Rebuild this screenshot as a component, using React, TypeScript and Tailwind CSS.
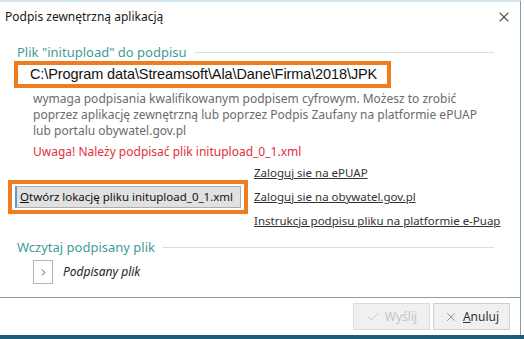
import { X, Check, ChevronRight } from "lucide-react";

const ui = { fontFamily: '"Noto Sans", "Open Sans", sans-serif' };

const GroupTitle = ({ text }: { text: string }) => (
  <div className="flex items-center gap-2 pl-[17px] pr-[26px]">
    <span className="text-[13px] text-[#3f9a96] leading-[16px] whitespace-nowrap">{text}</span>
    <div className="flex-1 h-px bg-[#dcdcdc]" />
  </div>
);

export default function App() {
  return (
    <div className="w-[524px] h-[339px] bg-white flex flex-col overflow-hidden" style={ui}>
      <div className="flex flex-1 min-h-0">
        <div className="w-[521px] flex flex-col border-t-2 border-t-[#d6e6f0] border-r border-r-[#7d9db5]">
          {/* title bar */}
          <div className="h-[30px] flex items-center justify-between pl-[5px] pr-[8px]">
            <span className="text-[12px] text-[#1a1a1a]">Podpis zewnętrzną aplikacją</span>
            <X size={16} strokeWidth={1.6} className="text-[#555]" />
          </div>

          {/* content */}
          <div className="flex flex-col pt-[12px]">
            <GroupTitle text={'Plik "initupload" do podpisu'} />
            <div className="ml-[14px] mt-[1px] w-[377px] h-[27px] border-4 border-[#f07c20] flex items-center pl-[12px] whitespace-nowrap overflow-hidden">
              <span className="text-[14.5px] leading-none text-[#111] tracking-[-0.1px]" style={{ fontFamily: '"Liberation Sans", Arial, sans-serif' }}>
                C:\Program data\Streamsoft\Ala\Dane\Firma\2018\JPK
              </span>
            </div>
            <div className="pl-[33px] pt-[3px] text-[12px] leading-[16px] text-[#6b6b6b] whitespace-nowrap">
              <div>wymaga podpisania kwalifikowanym podpisem cyfrowym. Możesz to zrobić</div>
              <div>poprzez aplikację zewnętrzną lub poprzez Podpis Zaufany na platformie ePUAP</div>
              <div>lub portalu obywatel.gov.pl</div>
            </div>
            <div className="pl-[33px] pt-[5px] text-[12px] leading-[16px] text-[#e2303c] whitespace-nowrap">
              Uwaga! Należy podpisać plik initupload_0_1.xml
            </div>

            <div className="flex items-center pl-[8px] mt-[1px]">
              <div className="w-[240px] h-[34px] shrink-0 border-4 border-[#f07c20] flex items-center justify-center">
                <div className="w-[226px] h-[22px] bg-[#e1e1e1] border border-[#adadad] border-l-[#5b9bd5] border-l-2 flex items-center pl-[3px] text-[11.5px] text-[#111] whitespace-nowrap overflow-hidden">
                  <span><span className="underline">O</span>twórz lokację pliku initupload_0_1.xml</span>
                </div>
              </div>
              <div className="flex flex-col pl-[6px] text-[11.5px] leading-[24px] text-[#333] whitespace-nowrap">
                <span className="underline">Zaloguj sie na ePUAP</span>
                <span className="underline">Zaloguj sie na obywatel.gov.pl</span>
                <span className="underline">Instrukcja podpisu pliku na platformie e-Puap</span>
              </div>
            </div>

            <div className="mt-[6px]">
              <GroupTitle text="Wczytaj podpisany plik" />
            </div>
            <div className="flex items-center gap-[10px] pl-[33px] mt-[5px]">
              <div className="w-[20px] h-[24px] border border-[#b5b5b5] flex items-center justify-center">
                <ChevronRight size={11} strokeWidth={2} className="text-[#444]" />
              </div>
              <span className="italic text-[12px] text-[#222]">Podpisany plik</span>
            </div>
          </div>

          <div className="mt-auto border-t border-[#9a9a9a] h-[38px] flex items-center justify-end gap-[3px] pr-[10px]">
            <div className="w-[77px] h-[27px] bg-[#f0f0f0] border border-[#dcdcdc] flex items-center justify-center gap-[5px] text-[12px] text-[#c4c4c4]">
              <Check size={14} strokeWidth={1.5} />
              <span>Wyślij</span>
            </div>
            <div className="w-[77px] h-[27px] bg-[#f0f0f0] border border-[#d0d0d0] flex items-center justify-center gap-[5px] text-[12px] text-[#333]">
              <X size={14} strokeWidth={1.3} className="text-[#777]" />
              <span><span className="underline">A</span>nuluj</span>
            </div>
          </div>
        </div>
      </div>
      <div className="h-[4px] bg-[#1d5d78]" />
    </div>
  );
}
